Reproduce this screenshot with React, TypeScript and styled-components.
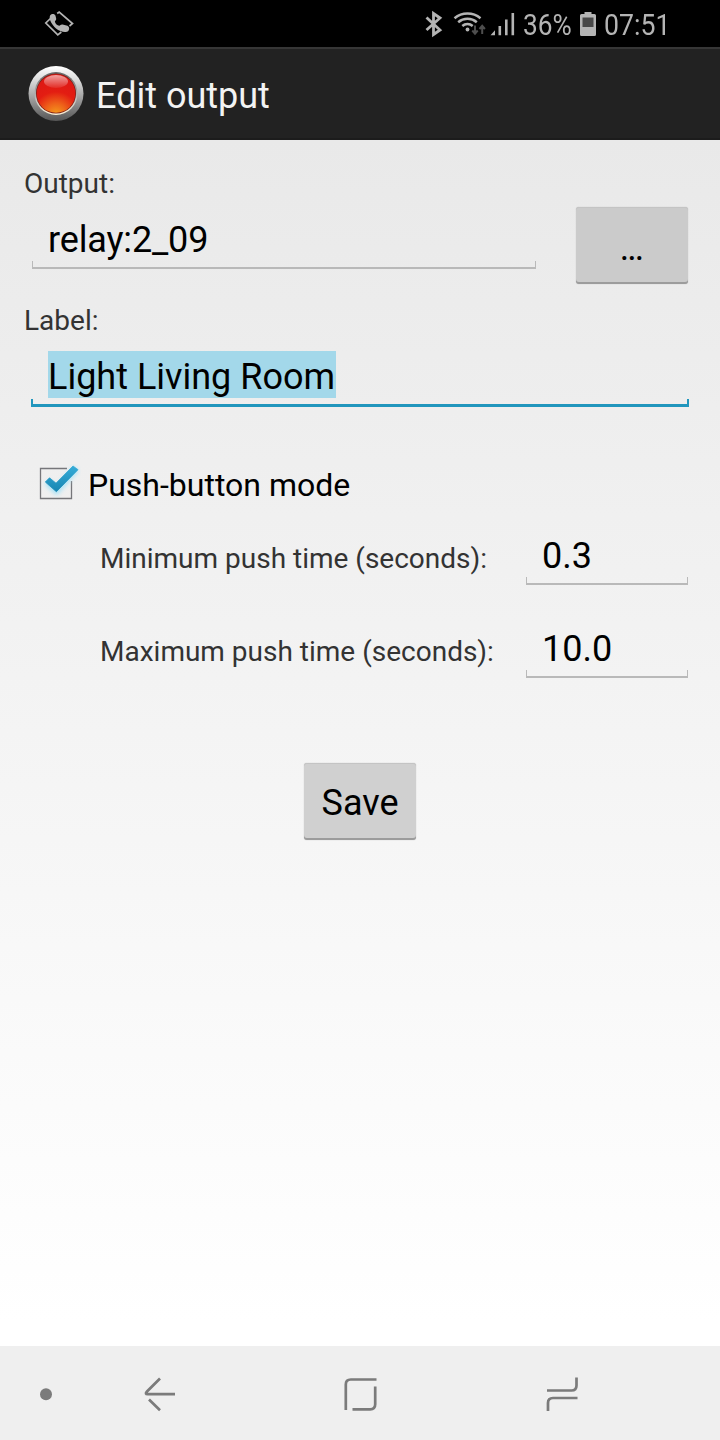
import React from "react";
import styled, { createGlobalStyle } from "styled-components";

const GlobalStyle = createGlobalStyle`
  * { box-sizing: border-box; }
  body { margin: 0; font-family: Roboto, "Liberation Sans", sans-serif; color: #000; }
  svg { display: block; flex: none; }
`;

const Screen = styled.div`
  display: flex;
  flex-direction: column;
  width: 720px;
  height: 1440px;
  overflow: hidden;
`;

const StatusBar = styled.header`
  display: flex;
  align-items: flex-start;
  height: 47px;
  padding: 0 50px 0 44px;
  background: #000;
`;

const Spacer = styled.div`
  flex: 1;
`;

const StatusText = styled.span<{ $width: number; $gap: number; $squeeze: number }>`
  width: ${(p) => p.$width}px;
  margin-left: ${(p) => p.$gap}px;
  font-size: 29px;
  line-height: 51px;
  color: #b4b4b4;
  white-space: nowrap;
  transform: scaleX(${(p) => p.$squeeze});
  transform-origin: 0 50%;
`;

const TitleBar = styled.div`
  display: flex;
  align-items: center;
  gap: 11px;
  height: 93px;
  padding-left: 27px;
  background: #222;
  border-top: 2px solid #363636;
  border-bottom: 2px solid #1c1c1c;
`;

const Title = styled.h1`
  margin: 5px 0 0;
  font-size: 36px;
  line-height: 44px;
  font-weight: 400;
  color: #f3f3f3;
`;

const Form = styled.main`
  display: flex;
  flex-direction: column;
  flex: 1;
  padding: 24px 31px 0 24px;
  background: linear-gradient(#e9e9e9, #fff 98%);
`;

const Caption = styled.label`
  height: 38px;
  font-size: 28px;
  line-height: 40px;
  color: #333;
  white-space: nowrap;
`;

const OutputRow = styled.div`
  display: flex;
  align-items: flex-start;
  justify-content: space-between;
  height: 82px;
  margin-bottom: 17px;
  padding: 0 1px 0 8px;
`;

const Field = styled.div<{ $width: number; $top?: number; $left?: number }>`
  width: ${(p) => p.$width}px;
  margin-top: ${(p) => p.$top ?? 0}px;
  margin-left: ${(p) => p.$left ?? 0}px;
`;

const Value = styled.div<{ $focused?: boolean; $spacing?: number }>`
  height: ${(p) => (p.$focused ? 48 : 44)}px;
  padding-left: ${(p) => (p.$focused ? 17 : 16)}px;
  font-size: 36px;
  line-height: 46px;
  letter-spacing: ${(p) => p.$spacing ?? 0}px;
  white-space: nowrap;
`;

const Underline = styled.div<{ $focused?: boolean }>`
  height: 8px;
  border: solid ${(p) => (p.$focused ? "#2196bd" : "#b9b9b9")};
  border-width: ${(p) => (p.$focused ? "0 2px 3px" : "0 1px 2px")};
`;

const Selection = styled.span`
  display: block;
  width: 288px;
  height: 47px;
  line-height: 52px;
  background: #a3d8ea;
`;

const Button = styled.button<{ $dots?: boolean }>`
  width: 112px;
  height: 77px;
  padding: ${(p) => (p.$dots ? "4px 2px 0 0" : "2px 0 0")};
  border: 0;
  border-radius: 3px;
  background: ${(p) => (p.$dots ? "#cbcbcb" : "#d0d0d0")};
  box-shadow: inset 0 -2px 0 #9c9c9c, inset 0 1px 0 #c4c4c4, 0 0 1px #aaa;
  font-family: inherit;
  font-size: 36px;
  line-height: 44px;
  letter-spacing: ${(p) => (p.$dots ? -2 : 0)}px;
  color: #000;
`;

const OutputButton = styled(Button)`
  margin-top: 5px;
`;

const SaveButton = styled(Button)`
  align-self: center;
  margin: 85px 0 0 7px;
`;

const CheckRow = styled.label`
  display: flex;
  gap: 7px;
  height: 40px;
  margin-top: 57px;
  padding-left: 15px;
  font-size: 32px;
  line-height: 43px;
`;

const TimeRow = styled.div<{ $top: number }>`
  display: flex;
  justify-content: space-between;
  height: 52px;
  margin-top: ${(p) => p.$top}px;
  padding: 0 1px 0 76px;
`;

const TimeCaption = styled(Caption)`
  margin-top: 6px;
`;

const NavBar = styled.nav`
  display: flex;
  height: 94px;
  background: #efefef;
`;

const PhoneIcon = () => (
  <svg width="30" height="47" viewBox="44 0 30 47" fill="none">
    <path d="M50.500 18.500 45.800 23l12 11.800 3.500-2.800M57.200 13.500l2-1.500L72.500 23.500l-3 2.500" stroke="#b4b4b4" strokeWidth="1.700" />
    <path d="M50.200 15.300c1.600-2 4.600-1.600 5.300.4l.7 3c.2 1.400-1.400 2-1.300 3 .5 2 2.400 3.700 4.300 4 1.200-.2 1.700-1.600 3.300-1.200l5 1.200c2 .8 2.200 3.600.8 5.200-2.400 2.200-8.400.8-12.300-2.500-4.200-3.500-7.700-9.500-5.800-13.100Z" fill="#b4b4b4" />
  </svg>
);

const StatusIcons = () => (
  <svg width="92" height="47" viewBox="424 0 92 47" fill="none" stroke="#b4b4b4">
    <path d="m426.500 17.500 13.500 12.500-6.500 4.500V13.500l6.500 4.500-13.500 12" strokeWidth="2.800" />
    <g strokeWidth="2.500">
      <path d="M454.500 18.200c7.500-6.300 18.500-6.300 26 0" />
      <path d="M458.200 22.200c5.400-4.600 13.200-4.600 18.600 0" />
      <path d="M462.300 26c3-2.700 7.400-2.700 10.400 0" />
    </g>
    <circle cx="467.500" cy="29.500" r="1.900" fill="#b4b4b4" stroke="none" />
    <path d="M475 25.500v8m-2.700-3 2.700 3.200 2.700-3.200M482.200 34v-8m-2.700 3 2.700-3.200 2.700 3.200" stroke="#4e4e4e" strokeWidth="2" />
    <path d="M490.500 35.300h4.500v-5Z" fill="#b4b4b4" stroke="none" />
    <path d="M499.800 35.300V26M506.300 35.300V19.500M512.800 35.300V13" strokeWidth="2.600" />
  </svg>
);

const BatteryIcon = () => (
  <svg width="16" height="47" viewBox="580 0 16 47">
    <path d="M584.500 12h7v2h3q1.500 0 1.500 1.500v19q0 1.500-1.500 1.500h-13q-1.500 0-1.500-1.500v-19q0-1.500 1.500-1.500h3Z" fill="#b4b4b4" />
    <path d="M582.500 17.500h11V27h-11Z" fill="#484848" />
  </svg>
);

const AppIcon = () => (
  <svg width="58" height="60" viewBox="0 0 58 60">
    <defs>
      <linearGradient id="ring" x2="0" y2="1">
        <stop offset="0" stopColor="#fff" />
        <stop offset=".25" stopColor="#dcdcdc" />
        <stop offset="1" stopColor="#555" />
      </linearGradient>
      <linearGradient id="rim" x2="0" y2="1">
        <stop offset="0" stopColor="#666" />
        <stop offset=".6" stopColor="#bbb" />
        <stop offset="1" stopColor="#fff4d8" />
      </linearGradient>
      <radialGradient id="lamp" cx=".5" cy="1.05" r=".85">
        <stop offset="0" stopColor="#f5a01c" />
        <stop offset=".35" stopColor="#ee621a" />
        <stop offset=".7" stopColor="#e31d12" />
        <stop offset="1" stopColor="#df1914" />
      </radialGradient>
      <linearGradient id="shine" x2="0" y2="1">
        <stop offset="0" stopColor="#fff" stopOpacity=".6" />
        <stop offset="1" stopColor="#fff" stopOpacity=".08" />
      </linearGradient>
    </defs>
    <circle cx="29" cy="29.500" r="27.500" fill="url(#ring)" />
    <circle cx="29" cy="29.500" r="21.500" fill="url(#rim)" />
    <circle cx="29" cy="29.500" r="20" fill="#7c1c14" />
    <circle cx="29" cy="29.500" r="19.300" fill="url(#lamp)" />
    <ellipse cx="29" cy="17.500" rx="12" ry="6.500" fill="url(#shine)" />
  </svg>
);

const CheckIcon = () => (
  <svg width="42" height="40" viewBox="39 464 42 40" fill="none">
    <defs>
      <filter id="glow" x="-30%" y="-30%" width="160%" height="160%">
        <feGaussianBlur stdDeviation="2" />
      </filter>
      <linearGradient id="tick" x2="0" y2="1">
        <stop offset="0" stopColor="#36acd8" />
        <stop offset="1" stopColor="#1786b2" />
      </linearGradient>
    </defs>
    <path d="M67 468.500H40.500v30h31V481" stroke="#76767a" strokeWidth="1.300" />
    <path d="m47 482 9.500 8.500L76 468.500" stroke="#a8e2f6" strokeWidth="7" filter="url(#glow)" />
    <path d="m45.300 482 4.200-4.200 6.500 5.400 17-17.200 5 3.700-21.600 22Z" fill="url(#tick)" stroke="url(#tick)" strokeWidth=".8" />
  </svg>
);

const NavIcons = () => (
  <svg width="720" height="94" viewBox="0 1346 720 94" fill="none" stroke="#7b7b7b" strokeWidth="2.700">
    <circle cx="46" cy="1394.200" r="6" fill="#7b7b7b" stroke="none" />
    <path d="M160 1378.500 147 1391.500q-2.500 2.700.8 2.700H175M149 1399.500l11 10.700" />
    <path d="M345.800 1410v-25.500q0-5 5-5H376.500M375.200 1386.500v17.800q0 5-5 5H352.500" />
    <path d="M547 1390.500h24.500q5 0 5-5V1377.500M577.500 1398h-24.500q-5 0-5 5v8" />
  </svg>
);

export default function App() {
  return (
    <Screen>
      <GlobalStyle />
      <StatusBar>
        <PhoneIcon />
        <Spacer />
        <StatusIcons />
        <StatusText $width={48} $gap={7} $squeeze={0.905}>36%</StatusText>
        <BatteryGap />
        <BatteryIcon />
        <StatusText $width={66} $gap={8} $squeeze={0.92}>07:51</StatusText>
      </StatusBar>
      <TitleBar>
        <AppIcon />
        <Title>Edit output</Title>
      </TitleBar>
      <Form>
        <Caption>Output:</Caption>
        <OutputRow>
          <Field $width={504} $top={15}>
            <Value $spacing={-0.15}>relay:2_09</Value>
            <Underline />
          </Field>
          <OutputButton $dots>...</OutputButton>
        </OutputRow>
        <Caption>Label:</Caption>
        <Field $width={658} $top={12} $left={7}>
          <Value $focused>
            <Selection>Light Living Room</Selection>
          </Value>
          <Underline $focused />
        </Field>
        <CheckRow>
          <CheckIcon />
          Push-button mode
        </CheckRow>
        <TimeRow $top={29}>
          <TimeCaption>Minimum push time (seconds):</TimeCaption>
          <Field $width={162}>
            <Value>0.3</Value>
            <Underline />
          </Field>
        </TimeRow>
        <TimeRow $top={41}>
          <TimeCaption>Maximum push time (seconds):</TimeCaption>
          <Field $width={162}>
            <Value>10.0</Value>
            <Underline />
          </Field>
        </TimeRow>
        <SaveButton>Save</SaveButton>
      </Form>
      <NavBar>
        <NavIcons />
      </NavBar>
    </Screen>
  );
}

const BatteryGap = styled.div`
  width: 9px;
`;
